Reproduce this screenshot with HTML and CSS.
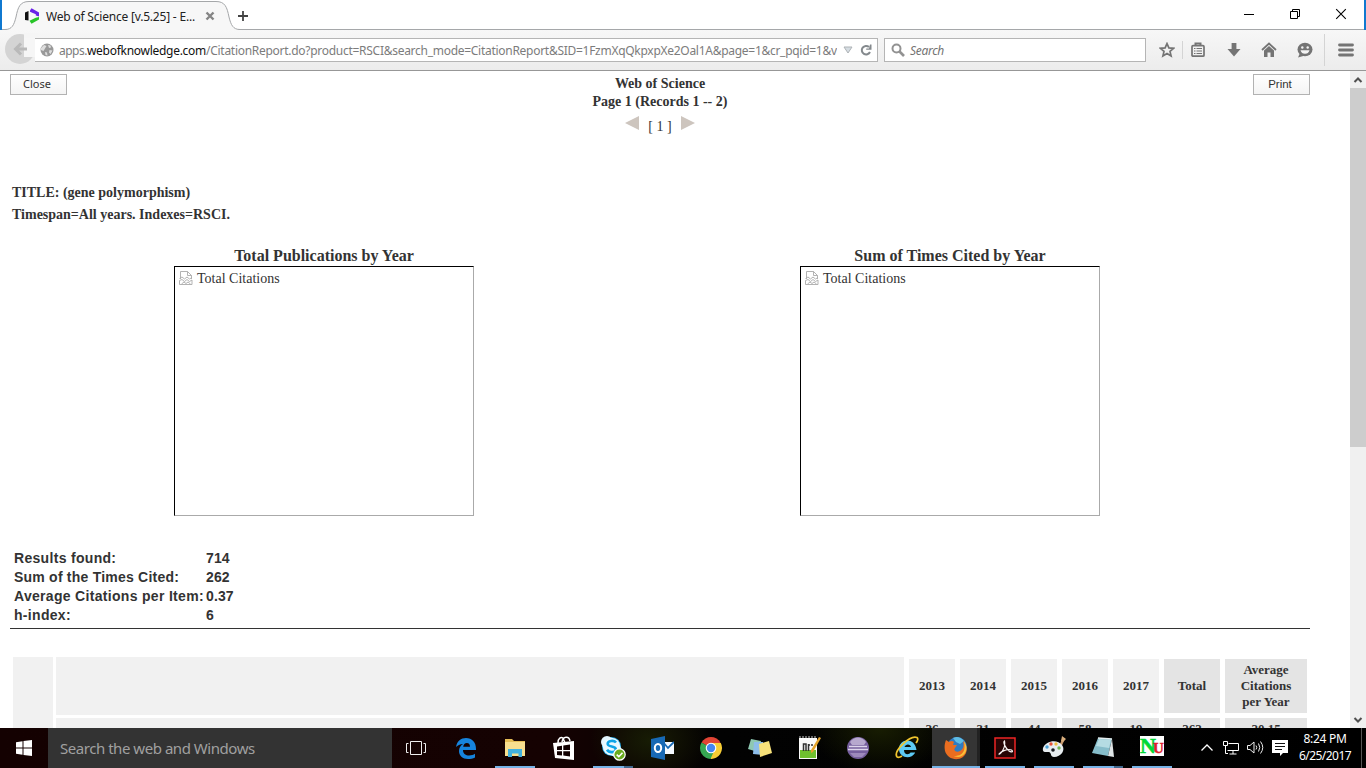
FILE: index.html
```html
<!DOCTYPE html>
<html lang="en">
<head>
<meta charset="utf-8">
<title>Web of Science [v.5.25] - Export</title>
<link rel="stylesheet" href="styles.css">
</head>
<body>
<div class="screen">
  <header class="tabbar">
    <svg class="tab-shape" width="242" height="30" viewBox="0 0 242 30"><path d="M0 29.5H3C10 29.5 12 25 14 17C16 7 18 1.500 27 1.500H214C223 1.500 225 7 227 17C229 25 231 29.500 238 29.500H242V30H0Z" fill="#f7f7f7"/><path d="M0 29.500H3C10 29.500 12 25 14 17C16 7 18 1.500 27 1.500H214C223 1.500 225 7 227 17C229 25 231 29.500 238 29.500H242" fill="none" stroke="#a5a7a9"/></svg>
    <div class="tab">
      <svg class="favicon" width="16" height="16" viewBox="0 0 16 16"><path d="M1 4.500L4.500 3V12.500L1 12Z" fill="#111"/><path d="M6 2.500L7.500 .3L15 4.500V8.500L11.800 7.500V6.300L6 3.800Z" fill="#6a22e8"/><path d="M15 9V11.500L7.500 15.800L5.500 12.800L11.800 9.800Z" fill="#27c427"/></svg>
      <span class="tab-title">Web of Science [v.5.25] - E...</span>
      <svg class="tab-close" width="10" height="10" viewBox="0 0 10 10"><path d="M1.500 1.500L8.500 8.500M8.500 1.500L1.500 8.500" stroke="#858585" stroke-width="2.400"/></svg>
      <svg class="tab-new" width="12" height="12" viewBox="0 0 12 12"><path d="M6 1V11M1 6H11" stroke="#444" stroke-width="1.800"/></svg>
    </div>
    <div class="winbuttons">
      <svg width="12" height="12" viewBox="0 0 12 12"><path d="M1 6.500H11" stroke="#000"/></svg>
      <svg width="12" height="12" viewBox="0 0 12 12"><path d="M1.500 3.500H8.500V10.500H1.500ZM3.500 3V1.500H10.500V8.500H9" fill="none" stroke="#000"/></svg>
      <svg width="12" height="12" viewBox="0 0 12 12"><path d="M1.200 1.200L10.800 10.800M10.800 1.200L1.200 10.800" stroke="#000" stroke-width="1.100"/></svg>
    </div>
  </header>

  <nav class="toolbar">
    <svg class="back" width="34" height="34" viewBox="0 0 34 34"><circle cx="16" cy="16" r="15" fill="#d4d4d4"/><path d="M20 0H34V5H20Z" fill="#f5f5f5"/><path d="M20 5H34V24H20Z" fill="#f6f6f6"/><path d="M23 16H12M17 10.500L11.500 16L17 21.500" fill="none" stroke="#b9b9b9" stroke-width="3"/></svg>
    <div class="urlbar">
      <svg width="14" height="14" viewBox="0 0 14 14"><circle cx="7" cy="7" r="6.500" fill="#999"/><path d="M1 5L4 2L6.500 3L5 5.500L3.500 8L1 7ZM8 2L10.500 2.500L11 4.500L9 5ZM5 9L7 9.500L7.500 12.500L5.500 12ZM9.500 7L12.500 7.500L10.500 11L9 9.500Z" fill="#dedede"/></svg>
      <div class="url"><span class="url-sub">apps.</span><b>webofknowledge.com</b><span class="url-rest">/CitationReport.do?product=RSCI&amp;search_mode=CitationReport&amp;SID=1FzmXqQkpxpXe2Oal1A&amp;page=1&amp;cr_pqid=1&amp;v</span></div>
      <svg width="10" height="8" viewBox="0 0 10 8"><path d="M1 1H9L5 7Z" fill="#d5dce2" stroke="#aeb3b6"/></svg>
      <svg class="reload" width="12" height="12" viewBox="0 0 12 12"><path d="M9 3A4.300 4.300 0 1 0 10 8" fill="none" stroke="#84898d" stroke-width="2"/><path d="M11.500 .5V5.800H6.200V4.500H9L10 .5Z" fill="#84898d"/></svg>
    </div>
    <div class="searchbar">
      <svg width="14" height="14" viewBox="0 0 14 14"><circle cx="5.500" cy="5.500" r="4" fill="none" stroke="#929292" stroke-width="2"/><path d="M8.500 8.500L13 13" stroke="#929292" stroke-width="2.600"/></svg>
      <i>Search</i>
    </div>
    <div class="tools">
      <svg width="16" height="16" viewBox="0 0 16 16"><path d="M8 1.600L9.900 5.900L14.600 6.300L11 9.400L12.100 14L8 11.600L3.900 14L5 9.400L1.400 6.300L6.100 5.900Z" fill="none" stroke="#747474" stroke-width="1.700"/></svg>
      <div class="sep"></div>
      <svg width="16" height="16" viewBox="0 0 16 16"><path d="M5.500 3V1.500H10.500V3" fill="none" stroke="#747474" stroke-width="2"/><rect x="2" y="3.700" width="12" height="10.500" rx="1" fill="none" stroke="#747474" stroke-width="1.700"/><path d="M4 6.500H5.500M6.500 6.500H12M4 9H5.500M6.500 9H12M4 11.500H5.500M6.500 11.500H12" stroke="#747474" stroke-width="1.100"/></svg>
      <svg width="16" height="16" viewBox="0 0 16 16"><path d="M5.600 1H10.400V7H14.500L8 14.500L1.500 7H5.600Z" fill="#747474"/></svg>
      <svg width="16" height="16" viewBox="0 0 16 16"><path d="M1 8L8 1.500L15 8" fill="none" stroke="#747474" stroke-width="1.800"/><path d="M3 8.500L8 4L13 8.500V15H9.500V10.500H6.500V15H3Z" fill="#747474"/></svg>
      <svg width="16" height="16" viewBox="0 0 16 16"><ellipse cx="8" cy="7.500" rx="7.500" ry="6.700" fill="#747474"/><path d="M3 11L1 15.500L8 13.500Z" fill="#747474"/><circle cx="5.300" cy="5.500" r="1.200" fill="#f3f3f3"/><circle cx="10.700" cy="5.500" r="1.200" fill="#f3f3f3"/><path d="M3.500 8.200H12.500Q11.500 11.700 8 11.700T3.500 8.200Z" fill="#f3f3f3"/></svg>
      <div class="sep tall"></div>
      <svg width="16" height="14" viewBox="0 0 16 14"><path d="M1.500 2H14.500M1.500 7H14.500M1.500 12H14.500" stroke="#747474" stroke-width="2.800" stroke-linecap="round"/></svg>
    </div>
  </nav>

  <div class="viewport">
    <main class="page">
      <div class="head">
        <button class="btn">Close</button>
        <div class="heading">
          <div class="name">Web of Science</div>
          <div class="range">Page 1 (Records 1 -- 2)</div>
          <div class="pager">
            <svg width="14" height="14" viewBox="0 0 14 14"><path d="M14 0V14L0 7Z" fill="#cdc5be"/></svg>
            <span>[ 1 ]</span>
            <svg width="14" height="14" viewBox="0 0 14 14"><path d="M0 0V14L14 7Z" fill="#cdc5be"/></svg>
          </div>
        </div>
        <button class="btn btn-print">Print</button>
      </div>

      <div class="query">
        <div class="q1">TITLE: (gene polymorphism)</div>
        <div class="q2">Timespan=All years. Indexes=RSCI.</div>
      </div>

      <div class="charts">
        <section class="chart">
          <h2 class="h-pub">Total Publications by Year</h2>
          <div class="frame">
            <svg width="14" height="14" viewBox="0 0 14 14"><path d="M1.500 8V.5H8.500L12.500 4.500V8M8.500 .5V4.500H12.500M.5 7.500L3 6L5.500 8L8 6L10.500 8L13 6.500M.5 9.500L3 8.500L5.500 10.500L8 8.500L10.500 10.500L13 9V13.500H.5ZM2.500 13L5 11L7 12.500L9 11L11.500 13" fill="none" stroke="#aaa" stroke-width=".9"/></svg>
            <span>Total Citations</span>
          </div>
        </section>
        <section class="chart">
          <h2 class="h-cite">Sum of Times Cited by Year</h2>
          <div class="frame">
            <svg width="14" height="14" viewBox="0 0 14 14"><path d="M1.500 8V.5H8.500L12.500 4.500V8M8.500 .5V4.500H12.500M.5 7.500L3 6L5.500 8L8 6L10.500 8L13 6.500M.5 9.500L3 8.500L5.500 10.500L8 8.500L10.500 10.500L13 9V13.500H.5ZM2.500 13L5 11L7 12.500L9 11L11.500 13" fill="none" stroke="#aaa" stroke-width=".9"/></svg>
            <span>Total Citations</span>
          </div>
        </section>
      </div>

      <dl class="stats">
        <dt>Results found:</dt><dd>714</dd>
        <dt class="sum">Sum of the Times Cited:</dt><dd>262</dd>
        <dt>Average Citations per Item:</dt><dd>0.37</dd>
        <dt>h-index:</dt><dd>6</dd>
      </dl>

      <div class="report">
        <div class="col-no"></div>
        <div class="col-title"><div></div><div></div></div>
        <div class="years">
          <div>2013</div><div>2014</div><div>2015</div><div>2016</div><div>2017</div><div class="dark">Total</div><div class="dark">Average<br>Citations<br>per Year</div>
          <div class="dark">26</div><div class="dark">31</div><div class="dark">44</div><div class="dark">58</div><div class="dark">19</div><div class="dark">262</div><div class="dark">20.15</div>
        </div>
      </div>
    </main>
    <aside class="scrollbar">
      <svg width="16" height="17" viewBox="0 0 16 17"><path d="M4.500 11L8 7.500L11.500 11" fill="none" stroke="#505050" stroke-width="2"/></svg>
      <div class="thumb"></div>
      <svg class="down" width="16" height="17" viewBox="0 0 16 17"><path d="M4.500 7L8 10.500L11.500 7" fill="none" stroke="#505050" stroke-width="2"/></svg>
    </aside>
  </div>

  <footer class="taskbar">
    <div class="start"><svg width="16" height="16" viewBox="0 0 16 16"><path d="M0 2.300L6.500 1.300V7.500H0ZM7.500 1.100L16 0V7.500H7.500ZM0 8.500H6.500V14.700L0 13.700ZM7.500 8.500H16V16L7.500 14.900Z" fill="#fff"/></svg></div>
    <div class="cortana"><span>Search the web and Windows</span></div>
    <div class="task view"><svg width="22" height="16" viewBox="0 0 22 16"><path d="M5.500 1.500H16.500V14.500H5.500ZM3.500 3.500H1.500V12.500H3.500M18.500 3.500H20.500V12.500H18.500" fill="none" stroke="#eee"/></svg></div>
    <div class="apps">
      <div class="task"><svg width="22" height="22" viewBox="0 0 22 22"><path d="M1 10C2 4 6 1 11 1C17 1 21 5 21 12V13H8C8 17 11 18.500 14 18.500C16.500 18.500 18.500 17.700 20 16.800V20.500C18 21.500 15.500 22 13 22C7.500 22 4 18.500 4 14C4 11 5.500 8.500 8 7C5 7 2.500 8.500 1 10ZM8.200 9.800H15C15 7.500 14 6 11.800 6C9.800 6 8.500 7.500 8.200 9.800Z" fill="#1683dc"/></svg></div>
      <div class="task open"><svg width="22" height="20" viewBox="0 0 22 20"><path d="M1 1H8L10 3H21V18H1Z" fill="#e5bd56"/><path d="M1 4H21V18H1Z" fill="#f8df8f"/><path d="M4 19V11H18V19H14.500V15.500H8V19Z" fill="#42b1df"/></svg></div>
      <div class="task"><svg width="22" height="24" viewBox="0 0 22 24"><path d="M5 7C5 2 8 .7 10 2.200L12 7M9 6C10 0 16-.5 17 5" fill="none" stroke="#fff" stroke-width="1.500"/><path d="M0 7L21 5V24L2 22Z" fill="#fff"/><path d="M4 10.500L9 9.800V14H4ZM10.300 9.600L17 8.600V14H10.300ZM4 15.200H9V19.400L4 19ZM10.300 15.200H17V20.400L10.300 19.600Z" fill="#100"/></svg></div>
      <div class="task open stack-sm"><svg width="26" height="26" viewBox="0 0 26 26"><circle cx="11.500" cy="11.500" r="9.500" fill="#20a9e8"/><circle cx="7" cy="7" r="6" fill="#e4f7ff"/><circle cx="16" cy="16" r="6" fill="#d6f3ff"/><circle cx="11.500" cy="11.500" r="8.700" fill="#e9f9ff"/><path d="M16 7.500C14 5 7.500 5.500 7.700 9C7.900 12.500 16 10.500 15.800 14.300C15.500 18 9 18 7 14.800" fill="none" stroke="#0da4e7" stroke-width="2.600"/><circle cx="19.500" cy="19.500" r="5.700" fill="#69ab1e" stroke="#fff" stroke-width="1.200"/><path d="M16.700 19.700L18.800 21.700L22.500 17.700" fill="none" stroke="#fff" stroke-width="1.600"/></svg></div>
      <div class="task"><svg width="23" height="24" viewBox="0 0 23 24"><path d="M10 6H23V18H10Z" fill="#f5faff"/><path d="M12 6L17 12L23 6" fill="none" stroke="#1769b4" stroke-width="1.800"/><path d="M0 3L14 0V24L0 21Z" fill="#1769b4"/><ellipse cx="7" cy="12" rx="3.200" ry="3.900" fill="none" stroke="#fff" stroke-width="2"/></svg></div>
      <div class="task"><svg width="22" height="22" viewBox="0 0 22 22"><path d="M11 11L1.500 5.500A11 11 0 0 1 20.500 5.500Z" fill="#e24435"/><path d="M11 11V6H20.800A11 11 0 0 1 10.500 22Z" fill="#f7cd35"/><path d="M1.500 5.500L11 11L14 14L10.500 22A11 11 0 0 1 1.500 5.500Z" fill="#36a853"/><circle cx="11" cy="11" r="5.300" fill="#fff"/><circle cx="11" cy="11" r="4.200" fill="#4586f3"/></svg></div>
      <div class="task"><svg width="24" height="20" viewBox="0 0 24 20"><path d="M3 1L13 3L10 14L0 11Z" fill="#8ec8b2"/><path d="M6 4L15 4L15 17L5 16Z" fill="#8dbdea"/><path d="M11 6L21 3L24 15L12 19Z" fill="#f7e17a"/></svg></div>
      <div class="task"><svg width="23" height="24" viewBox="0 0 23 24"><path d="M1 2H19V23H1Z" fill="#fafafa"/><path d="M2 14H18V22H2Z" fill="#6fc02f"/><path d="M2 2V0M5 2V0M8 2V0M11 2V0M14 2V0M17 2V0" stroke="#ccc"/><path d="M5.500 15V8H8V15M10.500 8V15M10 9H12M13 9H15" fill="none" stroke="#333" stroke-width="1.500"/><path d="M21 1L23 2L15 16L13 17V14Z" fill="#e5a42c"/></svg></div>
      <div class="task"><svg width="22" height="22" viewBox="0 0 22 22"><circle cx="11" cy="11" r="11" fill="#765f9e"/><path d="M3 5C7-1 15-1 19 5L17 8H5Z" fill="#b7a8ce"/><path d="M2 9.500H20M1 12.500H21" stroke="#ded5ec" stroke-width="1.300"/><path d="M3 16H19L15 20H7Z" fill="#9d89bc"/></svg></div>
      <div class="task"><svg width="24" height="24" viewBox="0 0 24 24"><path d="M20 17C16 24 4 22 4 13C4 2 20 1 21.500 14H9C9 19 14 19 15.500 16.500H20M9.500 11H16C15.500 7.500 10.500 7.500 9.500 11Z" fill="#5dcaf4" fill-rule="evenodd"/><path d="M2 21C-2 15 15-1 22 1.500C24 3 21 7 21 7M2 21C4 22 7 20 7 20" fill="none" stroke="#f0c52e" stroke-width="1.800"/></svg></div>
      <div class="task active"><svg width="24" height="24" viewBox="0 0 24 24"><circle cx="13" cy="11" r="10" fill="#2f7cc2"/><path d="M9 2Q15-1 20 5L16 8L12 6Z" fill="#60bde5"/><path d="M2 4L5 6Q8 4 10 6L9 9L13 9L11 12C9 14 12 17 16 15C20 13 20 8 19 5C24 9 24 17 19 21C12 26 3 22 1 15C0 10 1 7 2 4Z" fill="#e96d20"/><path d="M20 5C24 11 23 17 18 20C14 22 10 20 10 20C22 20 21 11 20 5Z" fill="#f9bf38"/></svg></div>
      <div class="task open"><svg width="22" height="22" viewBox="0 0 22 22"><path d="M1 1H21V21H1Z" fill="#260505" stroke="#ed2524" stroke-width="1.500"/><path d="M10.500 4C8.500 5 12 12 15 14C17 15.500 20 15 17.500 13C14 11.500 7 14 5 17C6 18 12 11 10.500 4Z" fill="none" stroke="#f8f4f4" stroke-width="1.200"/></svg></div>
      <div class="task open"><svg width="24" height="24" viewBox="0 0 24 24"><path d="M17 13L22 2" stroke="#c7986c" stroke-width="2.500"/><path d="M19 5L20 0L24 3L21 6Z" fill="#d9ae7d"/><path d="M1 12C4 4 16 3 20 9C24 14 19 21 12 21C8 21 10 17 7 16C4 16 0 17 1 12Z" fill="#e7edf0"/><circle cx="5" cy="11" r="1.700" fill="#4ca3d8"/><circle cx="9" cy="8" r="1.700" fill="#e65237"/><circle cx="14" cy="8" r="1.700" fill="#eebd3d"/><circle cx="17" cy="12" r="1.700" fill="#73b852"/><circle cx="11" cy="14" r="1.800" fill="#171c20"/></svg></div>
      <div class="task open stack-sm"><svg width="24" height="22" viewBox="0 0 24 22"><path d="M7 1L21 2L17 19L1 16Z" fill="#86bdca"/><path d="M8 2L20 3L18 11L5 9Z" fill="#b5dce3"/><path d="M21 2L23 20L17 19Z" fill="#e0e6e7"/><path d="M7 1L21 2" stroke="#e3eef0" stroke-width="1.500"/></svg></div>
      <div class="task open"><div class="nu"><span>N</span><span>U</span></div></div>
    </div>
    <div class="tray">
      <svg width="12" height="16" viewBox="0 0 12 16"><path d="M.5 10.500L6 5L11.500 10.500" fill="none" stroke="#fff" stroke-width="1.300"/></svg>
      <svg class="net" width="16" height="16" viewBox="0 0 16 16"><path d="M5.500 3.500H15.500V10.500H4.500M10 10.500V14M6.500 14H13.500M.5 1.500H4.500V5.500H.5ZM2.500 5.500V13.500H5" fill="none" stroke="#fff"/></svg>
      <svg width="17" height="16" viewBox="0 0 17 16"><path d="M.5 5.500H3L7 2V13L3 9.500H.5ZM9 5.500Q10.500 7.500 9 9.500M11.500 3.500Q14 7.500 11.500 11.500M13.500 1.500Q18 7.500 13.500 13.500" fill="none" stroke="#eee"/></svg>
      <svg width="16" height="16" viewBox="0 0 16 16"><path d="M0 0H16V13H11L8 16V13H0Z" fill="#fff"/><path d="M3 3.500H13M3 6.500H13M3 9.500H10" stroke="#111"/></svg>
      <div class="clock"><span class="time">8:24 PM</span><span class="date">6/25/2017</span></div>
    </div>
  </footer>
</div>
</body>
</html>
```
FILE: styles.css
```css
* { box-sizing: border-box; }
body { margin: 0; overflow: hidden; font-family: "Liberation Serif", serif; color: #333; background: #fff; }
svg { display: block; flex: none; }
.screen { width: 1366px; height: 768px; display: flex; flex-direction: column; overflow: hidden; }

/* tab strip */
.tabbar { height: 30px; flex: none; display: flex; justify-content: space-between; border-left: 2px solid #1079d0; border-right: 2px solid #1079d0; position: relative; background: linear-gradient(#a5a7a9, #a5a7a9) bottom / 100% 1px no-repeat #fff; }
.tab-shape { position: absolute; left: 0; top: 0; }
.tab { position: relative; display: flex; align-items: center; padding: 2px 0 0 22px; font: 12px "Noto Sans", sans-serif; color: #222; }
.favicon { margin-right: 6px; }
.tab-title { width: 150px; white-space: nowrap; letter-spacing: -0.2px; }
.tab-close { margin-left: 9px; }
.tab-new { margin-left: 22px; }
.winbuttons { display: flex; gap: 34px; padding: 8px 17px 0 0; }

/* navigation toolbar */
.toolbar { height: 41px; flex: none; display: flex; align-items: center; background: linear-gradient(#f7f7f7, #ececec); border-bottom: 1px solid #979797; font: 12px "Noto Sans", sans-serif; }
.back { margin: 0 -3px 0 4px; }
.urlbar { width: 843px; height: 24px; display: flex; align-items: center; padding: 0 5px 0 5px; background: #fff; border: 1px solid #b5b5b5; border-left: 0; }
.url { flex: 1; height: 20px; line-height: 20px; margin: 2px 6px 0 5px; overflow: hidden; white-space: nowrap; color: #7c7c7c; letter-spacing: -0.28px; }
.url-sub { letter-spacing: -0.5px; }
.url b { font-weight: 400; color: #111; }
.reload { margin-left: 7px; }
.searchbar { width: 262px; height: 24px; margin-left: 6px; display: flex; align-items: center; gap: 5px; padding-left: 6px; background: #fff; border: 1px solid #b5b5b5; color: #737373; letter-spacing: -0.3px; }
.tools { display: flex; align-items: center; margin-left: 13px; }
.tools svg { margin-right: 19.500px; }
.tools svg:first-child { margin-right: 7px; }
.tools svg:nth-child(6) { margin-right: 11px; }
.tools svg:last-child { margin: 0; }
.sep { width: 1px; height: 18px; margin-right: 7px; background: #d4d4d4; }
.sep.tall { height: 32px; margin-right: 13px; }

/* document */
.viewport { height: 657px; flex: none; display: flex; overflow: hidden; }
.page { flex: 1; padding: 3px 40px 0 10px; }
.head { display: flex; justify-content: space-between; height: 108px; }
.btn { width: 57px; height: 21px; padding: 0 3px 2px 0; border: 1px solid #b2b2b2; background: linear-gradient(#fff, #f4f4f4); font: 11px "Noto Sans", sans-serif; color: #333; }
.btn-print { font: 11.500px "Liberation Sans", sans-serif; }
.heading { width: 200px; padding-top: 1px; text-align: center; font-size: 14px; line-height: 18px; font-weight: 700; }
.pager { display: flex; justify-content: center; gap: 9px; margin-top: 5px; font-weight: 400; }
.pager span { padding-top: 2px; }
.query { padding-left: 2px; font-size: 14px; line-height: 22px; font-weight: 700; height: 64px; }
.charts { display: flex; gap: 326px; padding-left: 164px; height: 303px; }
.chart { width: 300px; }
.chart h2 { margin: 0; font-size: 16px; line-height: 20px; text-align: center; white-space: nowrap; }
.frame { height: 250px; border: 1px solid #aaa; border-top-color: #000; border-left-color: #000; display: flex; gap: 4px; padding: 4px 0 0 4px; font-size: 14px; line-height: 16px; }
.stats { margin: 0; display: grid; grid-template-columns: 192px 1fr; grid-auto-rows: 19px; height: 80px; padding-left: 4px; border-bottom: 1px solid #333; font: bold 14px/19px "Liberation Sans", sans-serif; white-space: nowrap; }
.stats dt { letter-spacing: 0.31px; }
.stats .sum { letter-spacing: 0.22px; }
.stats dd { margin: 0; letter-spacing: 0.1px; }
.report { display: flex; gap: 3px; margin: 28px 0 0 3px; height: 100px; }
.col-no { width: 40px; background: #f1f1f1; }
.col-title { width: 848px; display: grid; grid-template-rows: 58px 39px; gap: 3px; }
.col-title div { background: #f1f1f1; }
.years { display: grid; grid-template-columns: repeat(5, 46px) 56px 82px; grid-template-rows: 54px 24px; gap: 5px; padding: 2px 0 0 2px; align-content: start; font-size: 13px; line-height: 16px; font-weight: 700; text-align: center; }
.years > div { display: flex; align-items: center; justify-content: center; background: #f1f1f1; }
.years > .dark { background: #e4e4e4; }
.years > .dark:nth-child(n + 8) { padding-bottom: 2px; }
.scrollbar { width: 16px; display: flex; flex-direction: column; background: #f0f0f0; }
.thumb { height: 359px; background: #cdcdcd; }
.down { margin-top: auto; }

/* taskbar */
.taskbar { height: 40px; flex: none; display: flex; background: radial-gradient(ellipse 60px 45px at 650px 12px, #171c04, transparent), radial-gradient(ellipse 70px 45px at 880px 0, #181d02, transparent), linear-gradient(90deg, #140101 0, #150202 550px, #020202 720px, #000 100%); font-family: "Noto Sans", sans-serif; }
.start { width: 48px; display: grid; place-items: center; }
.cortana { width: 344px; background: #333; padding-left: 12px; font-size: 15px; line-height: 40px; color: #a0a0a0; white-space: nowrap; letter-spacing: -0.46px; }
.task { width: 48px; height: 40px; display: flex; align-items: center; justify-content: center; position: relative; }
.apps { display: flex; gap: 1px; margin-left: 2px; }
.open::after { content: ""; position: absolute; left: 4px; bottom: 0; width: 40px; height: 2px; background: #76b2e6; }
.stack-sm::after { background: linear-gradient(90deg, #76b2e6 31px, #41688d 31px); }
.active { background: linear-gradient(90deg, #353535 45px, #222 45px); box-shadow: inset 0 -2px #76b2e6; }
.nu { width: 24px; height: 20px; display: flex; margin-bottom: 5px; background: #fff; font: bold 22px/20px "Liberation Serif", serif; }
.nu span:first-child { width: 13px; color: #00d936; letter-spacing: -3px; -webkit-text-stroke: 0.6px #00d936; }
.nu span:last-child { color: #df202b; font-size: 15px; line-height: 25px; -webkit-text-stroke: 0.5px #df202b; }
.tray { display: flex; align-items: center; flex: 1; gap: 8px; margin-left: 25px; color: #fff; border-right: 1px solid #555; margin-right: 4px; }
.net { margin-left: 2px; }
.clock { flex: 1; display: flex; flex-direction: column; align-items: center; font-size: 12px; line-height: 17px; padding: 0 7px 2px 0; white-space: nowrap; letter-spacing: -0.3px; }
.date { letter-spacing: -0.55px; }
```
